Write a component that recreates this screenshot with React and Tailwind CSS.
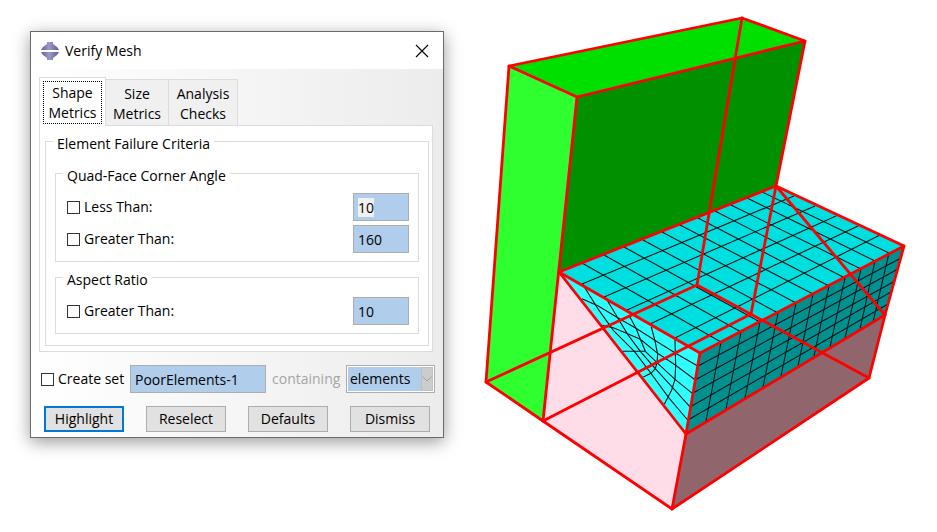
import { useEffect, useRef } from 'react';

// Edge points of the meshed block, one entry per element boundary
const topBack = [[582, 263], [604, 255], [624, 247], [643, 240], [662, 232], [680, 225], [698, 218], [715, 211], [731, 205], [747, 198], [762, 192]];
const topFront = [[721, 342], [741, 332], [760, 322], [778, 313], [796, 303], [813, 294], [829, 286], [845, 278], [861, 269], [875, 261], [889, 253]];
const bottomFront = [[706, 421], [726, 409], [745, 398], [763, 387], [781, 376], [798, 366], [814, 356], [830, 347], [845, 338], [860, 329], [873, 322]];
const topLeft = [[582, 284], [604, 297], [627, 310], [650, 324], [675, 338]];
const topRight = [[794, 196], [815, 206], [836, 216], [858, 226], [880, 235]];
const frontLeft = [[698, 366], [695, 380], [693, 393], [690, 407], [688, 420]];
const frontRight = [[901, 258], [898, 269], [895, 281], [891, 292], [888, 304]];

const edges = [
  'M509 66 742 18 805 41 577 97Z',
  'M509 66 486 382 543 421 577 97',
  'M805 41 776 186 559 272',
  'M742 18 697 285 486 382',
  'M697 285 869 378',
  'M776 186 751 314 543 421',
  'M776 186 885 315',
  'M776 186 904 246 700 353 559 272',
  'M559 272 686 434 700 353',
  'M686 434 885 315 904 246',
  'M686 434 672 509 543 421',
  'M672 509 869 378 885 315',
];

function MeshLines({ from, to }) {
  return from.map(([x, y], i) => (
    <line key={i} x1={x} y1={y} x2={to[i][0]} y2={to[i][1]} />
  ));
}

function Viewport() {
  return (
    <svg viewBox="480 12 432 502" className="block w-full" role="img" aria-label="Meshed part">
      <path fill="#00e000" d="M509 66 742 18 805 41 577 97Z" />
      <path fill="#2fff2f" d="M509 66 577 97 543 421 486 382Z" />
      <path fill="#009000" d="M577 97 805 41 776 186 559 272Z" />
      <path fill="#ffdde8" d="M559 272 686 434 672 509 543 421Z" />
      <path fill="#90666c" d="M686 434 885 315 869 378 672 509Z" />
      <path fill="#00dfdf" d="M559 272 776 186 904 246 700 353Z" />
      <path fill="#2fffff" d="M559 272 700 353 686 434Z" />
      <path fill="#009090" d="M700 353 904 246 885 315 686 434Z" />

      <g stroke="#001414" strokeWidth="1.1" fill="none">
        <MeshLines from={topBack} to={topFront} />
        <MeshLines from={topLeft} to={topRight} />
        <MeshLines from={topFront} to={bottomFront} />
        <MeshLines from={frontLeft} to={frontRight} />
      </g>

      {/* free mesh on the triangular side */}
      <g transform="translate(556 266) scale(.3333)" stroke="#001414" strokeWidth="3.3" fill="none">
        <path d="M357 222 359 298 357 340 347 372 325 415" />
        <path d="M286 183 297 225 305 265 303 290 298 308 285 322 262 333" />
        <path d="M220 150 240 187 253 220 268 256 200 256" />
        <path d="M150 97 185 155 215 205 253 256 298 308 350 365 402 423" />
        <path d="M80 55 127 130 172 193 235 256 285 322 338 395 395 462" />
        <path d="M78 98 127 120 185 155 240 187 300 225 359 262 425 300" />
        <path d="M137 178 172 185 215 203 253 220 305 262 359 298 418 342" />
        <path d="M268 256 303 290 357 340 410 383" />
      </g>

      <g stroke="#ff0000" strokeWidth="2.8" strokeLinejoin="round" strokeLinecap="round" fill="none">
        {edges.map((d) => (
          <path key={d} d={d} />
        ))}
      </g>
    </svg>
  );
}

function Logo() {
  return (
    <svg width="18" height="18" viewBox="0 0 18 18" aria-hidden="true">
      <defs>
        <linearGradient id="logo-shade">
          <stop offset="0" stopColor="#5f5b9c" />
          <stop offset=".45" stopColor="#9c99c8" />
          <stop offset="1" stopColor="#5c5899" />
        </linearGradient>
      </defs>
      <path fill="url(#logo-shade)" d="M6 0h6v2l4 3 2 3H0l2-3 4-3z" />
      <path fill="url(#logo-shade)" d="M0 10h18l-2 3-4 3v2H6v-2l-4-3z" />
    </svg>
  );
}

function Group({ title, className, children }) {
  return (
    <fieldset className={`min-w-0 border border-[#dcdcdc] ${className}`}>
      <legend className="px-1 pt-[6px]">{title}</legend>
      {children}
    </fieldset>
  );
}

function Check({ id, label }) {
  return (
    <div className="flex items-center gap-1">
      <input
        id={id}
        type="checkbox"
        className="size-[13px] appearance-none border border-[#333] bg-white checked:bg-[#333]"
      />
      <label htmlFor={id} className="whitespace-nowrap">{label}</label>
    </div>
  );
}

const field =
  'h-7 min-w-0 border border-[#adadad] bg-[#b0cdeb] px-1 outline-none selection:bg-[#f0f0f0fd] selection:text-black';

function Criterion({ id, label, value, inputRef }) {
  return (
    <div className="flex items-center justify-between">
      <Check id={id} label={label} />
      <input
        ref={inputRef}
        aria-label={`${label} value`}
        defaultValue={value}
        className={`w-14 caret-transparent ${field}`}
      />
    </div>
  );
}

function Tab({ first, second, active, className }) {
  if (active) {
    return (
      <button
        role="tab"
        aria-selected="true"
        className={`relative -mb-px border border-b-0 border-[#dcdcdc] bg-white px-[3px] pt-[3px] pb-[2px] ${className}`}
      >
        <span className="block border border-dotted border-black pt-px">
          {first}
          <br />
          {second}
        </span>
      </button>
    );
  }
  return (
    <button
      role="tab"
      aria-selected="false"
      className={`border-t border-r border-[#dcdcdc] bg-[#f0f0f0] pt-1 pb-px ${className}`}
    >
      {first}
      <br />
      {second}
    </button>
  );
}

function VerifyMeshDialog() {
  const lessThan = useRef(null);

  useEffect(() => {
    lessThan.current.focus();
    lessThan.current.select();
  }, []);

  return (
    <section
      role="dialog"
      aria-label="Verify Mesh"
      className="w-[414px] shrink-0 border border-[#6a6a6a] bg-white shadow-[0_4px_16px_rgba(0,0,0,0.4)]"
    >
      <header className="flex h-[37px] items-center bg-white pr-[14px] pl-[10px]">
        <Logo />
        <h1 className="ml-[6px]">Verify Mesh</h1>
        <button aria-label="Close" className="ml-auto">
          <svg width="14" height="14" viewBox="0 0 14 14" stroke="#000" strokeWidth="1.1">
            <path d="M1 1 13 13M13 1 1 13" />
          </svg>
        </button>
      </header>

      <div className="bg-linear-to-r from-white to-[#ececec] pt-2 pr-[10px] pb-[5px] pl-2">
        <div role="tablist" className="flex items-end">
          <Tab first="Shape" second="Metrics" className="w-[67px]" active />
          <Tab first="Size" second="Metrics" className="w-[63px]" />
          <Tab first="Analysis" second="Checks" className="w-[69px]" />
        </div>

        <div role="tabpanel" className="border border-[#dcdcdc] bg-white pt-[2px] pr-[3px] pb-[5px] pl-[5px]">
          <Group title="Element Failure Criteria" className="px-[9px] pb-[11px] [&>legend]:-ml-[2px]">
            <div className="pt-[6px]">
              <Group title="Quad-Face Corner Angle" className="px-[9px] pb-2 [&>legend]:-ml-[2px]">
                <div className="grid gap-1 pt-[7px] pl-[2px]">
                  <Criterion id="quad-less" label="Less Than:" value="10" inputRef={lessThan} />
                  <Criterion id="quad-greater" label="Greater Than:" value="160" />
                </div>
              </Group>
            </div>
            <div className="pt-[2px]">
              <Group title="Aspect Ratio" className="px-[9px] pb-2 [&>legend]:-ml-[2px]">
                <div className="pt-[7px] pl-[2px]">
                  <Criterion id="aspect-greater" label="Greater Than:" value="10" />
                </div>
              </Group>
            </div>
          </Group>
        </div>

        <div className="mt-[13px] -mr-[2px] flex items-center pl-[2px]">
          <Check id="create-set" label="Create set" />
          <input aria-label="Set name" defaultValue="PoorElements-1" className={`ml-auto w-[136px] ${field}`} />
          <label htmlFor="set-type" className="mx-[6px] w-[68px] whitespace-nowrap text-[#a5a5a5]">
            containing
          </label>
          <div className="flex h-7 w-[89px] border border-[#adadad] bg-white p-px">
            <div className="relative w-full">
              <select id="set-type" className="size-full appearance-none bg-[#b0cdeb] pl-[2px] outline-none">
                <option>elements</option>
                <option>nodes</option>
              </select>
              <span className="pointer-events-none absolute inset-y-0 right-0 flex w-3 items-center border border-[#bfbfbf] bg-[#cccccc]">
                <svg width="10" height="6" viewBox="0 0 10 6" fill="none" stroke="#a0a0a0">
                  <path d="M.5.5 5 5 9.5.5" />
                </svg>
              </span>
            </div>
          </div>
        </div>

        <div className="mt-[13px] flex justify-between pr-[3px] pl-[5px]">
          <button className="h-[26px] w-20 border-2 border-[#0078d7] bg-[#e1e1e1]">Highlight</button>
          <button className="h-[26px] w-20 border border-[#adadad] bg-[#e1e1e1]">Reselect</button>
          <button className="h-[26px] w-20 border border-[#adadad] bg-[#e1e1e1]">Defaults</button>
          <button className="h-[26px] w-20 border border-[#adadad] bg-[#e1e1e1]">Dismiss</button>
        </div>
      </div>
    </section>
  );
}

export default function App() {
  return (
    <main className="flex min-h-screen items-start gap-9 bg-white pr-[25px] pl-[30px] font-['Open_Sans','Noto_Sans',sans-serif] text-[14px] leading-5 text-black">
      <div className="mt-[31px] shrink-0">
        <VerifyMeshDialog />
      </div>
      <div className="mt-3 min-w-0 flex-1">
        <Viewport />
      </div>
    </main>
  );
}
